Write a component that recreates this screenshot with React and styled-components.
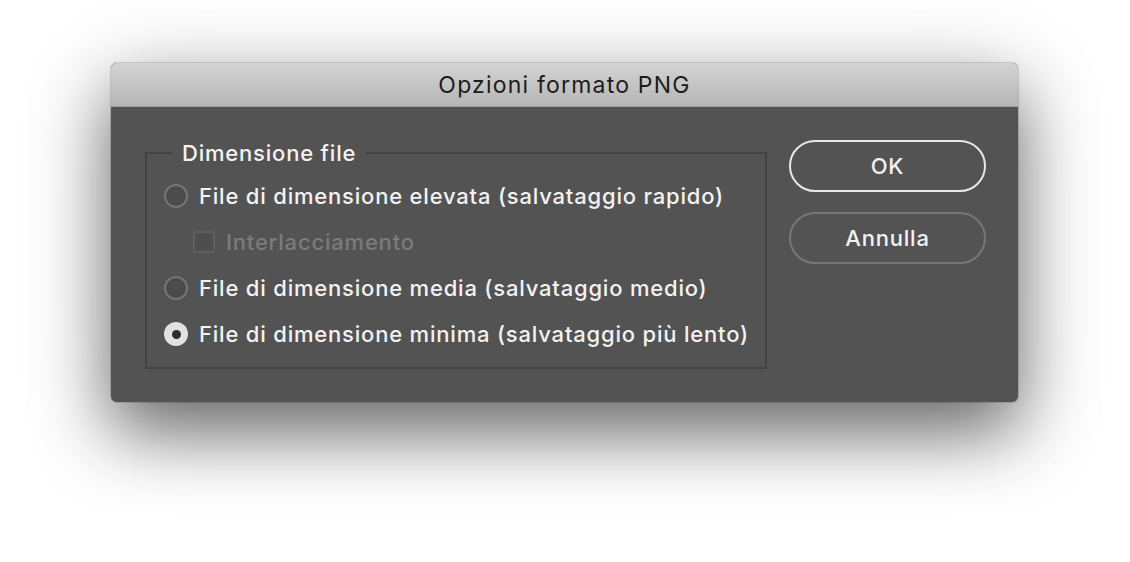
import React from "react";
import styled, { createGlobalStyle } from "styled-components";

const Global = createGlobalStyle`
  html, body { margin: 0; padding: 0; background: #ffffff; }
  body { font-family: Inter, "Liberation Sans", sans-serif; }
`;

const Page = styled.div`
  width: 1130px;
  height: 562px;
  padding: 63px 0 0 111px;
  box-sizing: border-box;
  overflow: hidden;
`;

const Window = styled.div`
  width: 907px;
  height: 339px;
  border-radius: 6px;
  overflow: hidden;
  background: #535353;
  display: flex;
  flex-direction: column;
  box-shadow: 0 0 0 1px rgba(0,0,0,0.14), 0 30px 70px rgba(0,0,0,0.55), 0 16px 110px rgba(0,0,0,0.12);
`;

const TitleBar = styled.div`
  height: 44px;
  flex: none;
  background: linear-gradient(#d4d4d4, #b5b5b5);
  display: flex;
  align-items: center;
  justify-content: center;
  color: #1c1c1c;
  font-size: 23px;
  letter-spacing: 1.2px;
  border-bottom: 1px solid #a2a2a2;
  box-sizing: border-box;
`;

const Body = styled.div`
  flex: 1;
  display: flex;
  align-items: flex-start;
  padding: 33px 32px 0 34px;
  gap: 22px;
`;

const Group = styled.fieldset`
  margin: 1px 0 0 0;
  width: 622px;
  height: 228px;
  box-sizing: border-box;
  border: 2px solid #434343;
  padding: 8px 0 0 17px;
  display: flex;
  flex-direction: column;
`;

const Legend = styled.legend`
  color: #f2f2f2;
  font-size: 22px;
  font-weight: 500;
  letter-spacing: 0.8px;
  padding: 0 10px;
  margin-left: 8px;
  line-height: 24px;
`;

const Row = styled.label`
  display: flex;
  align-items: center;
  height: 46px;
  gap: 11px;
  padding-left: ${(p) => (p.$indent ? "29px" : "0")};
  color: ${(p) => (p.$disabled ? "#7b7b7b" : "#f2f2f2")};
  font-size: 22px;
  font-weight: 500;
  letter-spacing: 0.8px;
`;

const Radio = styled.span`
  width: 24px;
  height: 24px;
  box-sizing: border-box;
  border-radius: 50%;
  flex: none;
  display: flex;
  align-items: center;
  justify-content: center;
  border: ${(p) => (p.$checked ? "none" : "2px solid #747474")};
  background: ${(p) => (p.$checked ? "#e2e2e2" : "#4b4b4b")};
  &::after {
    content: "";
    display: ${(p) => (p.$checked ? "block" : "none")};
    width: 9px;
    height: 9px;
    border-radius: 50%;
    background: #2e2e2e;
  }
`;

const Check = styled.span`
  width: 22px;
  height: 22px;
  box-sizing: border-box;
  border-radius: 3px;
  border: 2px solid #5e5e5e;
  background: #4e4e4e;
  flex: none;
`;

const Buttons = styled.div`
  display: flex;
  flex-direction: column;
  gap: 20px;
  width: 197px;
`;

const Button = styled.button`
  height: 52px;
  width: 197px;
  border-radius: 26px;
  background: transparent;
  border: 2px solid ${(p) => (p.$primary ? "#e8e8e8" : "#777777")};
  color: #f2f2f2;
  font-family: inherit;
  font-size: 22px;
  font-weight: 500;
  letter-spacing: 0.8px;
  padding: 0;
`;

const rows = [
  { label: "File di dimensione elevata (salvataggio rapido)", type: "radio" },
  { label: "Interlacciamento", type: "check", indent: true, disabled: true },
  { label: "File di dimensione media (salvataggio medio)", type: "radio" },
  { label: "File di dimensione minima (salvataggio più lento)", type: "radio", checked: true },
];

export default function App() {
  return (
    <>
      <Global />
      <Page>
        <Window>
          <TitleBar>Opzioni formato PNG</TitleBar>
          <Body>
            <Group>
              <Legend>Dimensione file</Legend>
              {rows.map((r) => (
                <Row key={r.label} $indent={r.indent} $disabled={r.disabled}>
                  {r.type === "radio" ? <Radio $checked={r.checked} /> : <Check />}
                  {r.label}
                </Row>
              ))}
            </Group>
            <Buttons>
              <Button $primary>OK</Button>
              <Button>Annulla</Button>
            </Buttons>
          </Body>
        </Window>
      </Page>
    </>
  );
}
